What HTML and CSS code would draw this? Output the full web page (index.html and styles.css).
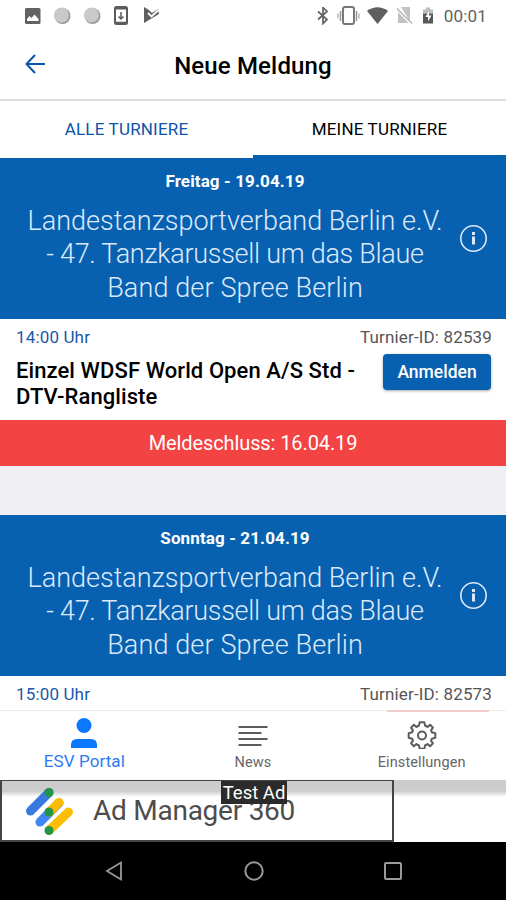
FILE: index.html
```html
<!DOCTYPE html>
<html lang="de">
<head>
    <meta charset="UTF-8">
    <meta name="viewport" content="width=device-width, initial-scale=1.0">
    <title>Neue Meldung</title>
    <link rel="stylesheet" href="styles.css">
</head>
<body>

<div class="status-bar">
    <div class="status-left">
        <svg width="17" height="17" viewBox="0 0 17 17"><rect x="1" y="0" width="15.500" height="16" rx="1.5" fill="#626262"/><path d="M3 13v-2l2.500-3 2 2 3-3.500 4 4.500v2z" fill="#fff"/></svg>
        <svg width="18" height="18" viewBox="0 0 18 18"><circle cx="9.500" cy="9" r="8" fill="#999"/><circle cx="8.500" cy="8" r="7.500" fill="#c9c9c9"/></svg>
        <svg width="18" height="18" viewBox="0 0 18 18"><circle cx="9.500" cy="9" r="8" fill="#999"/><circle cx="8.500" cy="8" r="7.500" fill="#c9c9c9"/></svg>
        <svg width="14" height="20" viewBox="0 0 14 20"><rect x="1" y="1" width="12" height="17" rx="1.500" fill="#fff" stroke="#5c5c5c" stroke-width="2"/><path d="M1 2.500h12M1 16.800h12" stroke="#5c5c5c" stroke-width="2"/><path d="M7 6v7M4.500 10.500L7 13l2.500-2.500" fill="none" stroke="#5c5c5c" stroke-width="1.500"/></svg>
        <svg width="17" height="18" viewBox="0 0 17 18"><path d="M1 0l5 3 3 3 6-4 1 5L1 16z" fill="#606060"/><path d="M5 6l3.500 3.500L15.500 3" fill="none" stroke="#fff" stroke-width="1.800"/></svg>
    </div>
    <div class="status-right">
        <svg width="14" height="18" viewBox="0 0 14 18"><path d="M2 4.500l9 8-4 4V.500l4 4-9 8" fill="none" stroke="#626262" stroke-width="1.700"/></svg>
        <svg width="23" height="20" viewBox="0 0 23 20"><rect x="6" y="1" width="11" height="17" rx="2" fill="none" stroke="#777" stroke-width="2"/><path d="M3.500 5v10M19.500 5v10" stroke="#999" stroke-width="1.500"/><path d="M1 7.500v5M22 7.500v5" stroke="#bbb" stroke-width="1.500"/></svg>
        <svg class="wifi" width="21" height="18" viewBox="0 0 21 18"><path d="M0 4Q10.500-3.500 21 4L10.500 17z" fill="#5e5e5e"/></svg>
        <svg class="sim" width="17" height="18" viewBox="0 0 17 18"><path d="M5 0h9v14.500z" fill="#c2c2c2"/><path d="M2 5v11h10.500z" fill="#c2c2c2"/><path d="M1 1.500l15 15" stroke="#b5b5b5" stroke-width="1.500"/></svg>
        <svg class="battery" width="12" height="18" viewBox="0 0 12 18"><path d="M1 2.500h3V.500h4v2h3v4H1z" fill="#bbb"/><path d="M1 6.500h10v10H1z" fill="#575757"/><path d="M7 4L3.500 10H6v4.500L9.500 8.500H7z" fill="#fff"/></svg>
        <span class="clock">00:01</span>
    </div>
</div>

<header class="header">
    <svg class="back" width="20" height="20" viewBox="0 0 20 20"><path d="M10 1L1.500 10l8.500 9M1.500 10H20" fill="none" stroke="#0d53a9" stroke-width="2"/></svg>
    <h1>Neue Meldung</h1>
</header>

<nav class="tabs">
    <div class="tab active"><span>ALLE TURNIERE</span></div>
    <div class="tab"><span>MEINE TURNIERE</span></div>
</nav>

<main class="content">
    <section class="event">
        <div class="event-head">
            <div class="event-date">Freitag - 19.04.19</div>
            <h2><span class="line1">Landestanzsportverband Berlin e.V.</span><br><span class="line2">- 47. Tanzkarussell um das Blaue</span><br><span class="line3">Band der Spree Berlin</span></h2>
            <svg class="info" width="28" height="28" viewBox="0 0 28 28"><circle cx="14.500" cy="14.500" r="12.700" fill="none" stroke="#dce9fa" stroke-width="1.600"/><path d="M14.500 8v3M14.500 12.500v8" stroke="#dce9fa" stroke-width="3"/></svg>
        </div>
        <div class="event-meta">
            <span class="time">14:00 Uhr</span>
            <span class="id">Turnier-ID: 82539</span>
        </div>
        <div class="event-body">
            <h3>Einzel WDSF World Open A/S Std -<br>DTV-Rangliste</h3>
            <button class="btn">Anmelden</button>
        </div>
        <div class="deadline">Meldeschluss: 16.04.19</div>
    </section>

    <section class="event">
        <div class="event-head">
            <div class="event-date">Sonntag - 21.04.19</div>
            <h2><span class="line1">Landestanzsportverband Berlin e.V.</span><br><span class="line2">- 47. Tanzkarussell um das Blaue</span><br><span class="line3">Band der Spree Berlin</span></h2>
            <svg class="info" width="28" height="28" viewBox="0 0 28 28"><circle cx="14.500" cy="14.500" r="12.700" fill="none" stroke="#dce9fa" stroke-width="1.600"/><path d="M14.500 8v3M14.500 12.500v8" stroke="#dce9fa" stroke-width="3"/></svg>
        </div>
        <div class="event-meta">
            <span class="time">15:00 Uhr</span>
            <span class="id">Turnier-ID: 82573</span>
        </div>
    </section>
</main>

<nav class="tab-bar">
    <div class="peek"></div>
    <div class="bar-item selected">
        <svg width="28" height="32" viewBox="0 0 28 32"><circle cx="14" cy="8.500" r="7.500" fill="#0a78ff"/><path d="M1 31v-3q0-6 6-6h14q6 0 6 6v3z" fill="#0a78ff"/></svg>
        <span>ESV Portal</span>
    </div>
    <div class="bar-item">
        <svg width="30" height="32" viewBox="0 0 30 32"><path d="M.500 10h29M.500 16h23M.500 22h29M.500 28h23" stroke="#5c5c5c" stroke-width="2"/></svg>
        <span>News</span>
    </div>
    <div class="bar-item">
        <svg width="32" height="32" viewBox="-16 -18.500 32 32"><path fill="none" stroke="#5c5c5c" stroke-width="2" stroke-linejoin="round" d="M-2.300-13.200H2.300L3.200-9.800Q4.700-9.300 5.600-8.600L8.100-10.800L10.900-7.900L9-5.200Q9.500-4.400 9.800-3.200L13.300-2.300V2.300L9.800 3.200Q9.500 4.400 9 5.200L10.900 7.900L8.100 10.800L5.600 8.600Q4.700 9.300 3.200 9.800L2.300 13.200H-2.300L-3.200 9.800Q-4.700 9.300-5.600 8.600L-8.100 10.800L-10.900 7.900L-9 5.200Q-9.500 4.400-9.800 3.200L-13.300 2.300V-2.300L-9.800-3.200Q-9.500-4.400-9-5.200L-10.900-7.900L-8.100-10.800L-5.600-8.600Q-4.700-9.300-3.200-9.800Z"/><circle r="4" fill="none" stroke="#5c5c5c" stroke-width="2"/></svg>
        <span>Einstellungen</span>
    </div>
</nav>

<div class="ad">
    <div class="ad-box">
        <svg width="50" height="50" viewBox="0 0 50 50"><g stroke-width="9" stroke-linecap="round"><path d="M7.500 25L26 6.500" stroke="#3979df"/><path d="M17 36L36 17" stroke="#4285f4"/><path d="M26.500 26l9.500-9.500" stroke="#fbbc04"/><path d="M26.500 44L45.500 26" stroke="#fbbc04"/></g><g fill="#249545"><circle cx="26" cy="6.500" r="4.500"/><circle cx="26" cy="26" r="4.500"/><circle cx="26" cy="44.500" r="4.500"/></g></svg>
        <span class="ad-name">Ad Manager 360</span>
    </div>
    <span class="test-ad">Test Ad</span>
</div>

<div class="nav-bar">
    <svg width="20" height="22" viewBox="0 0 20 22"><path d="M17 2.500v17L3 11z" fill="none" stroke="#999" stroke-width="1.800"/></svg>
    <svg width="20" height="20" viewBox="0 0 20 20"><circle cx="10" cy="10" r="8.700" fill="none" stroke="#999" stroke-width="2"/></svg>
    <svg width="20" height="20" viewBox="0 0 20 20"><rect x="2" y="2" width="16" height="16" rx="1" fill="none" stroke="#999" stroke-width="2"/></svg>
</div>

</body>
</html>
```
FILE: styles.css
```css
* {
    box-sizing: border-box;
}
body {
    font-family: Roboto, 'Liberation Sans', sans-serif;
    background-color: #fff;
    color: #000;
    display: flex;
    flex-direction: column;
    width: 506px;
    height: 900px;
    margin: 0;
    overflow: hidden;
}
svg {
    display: block;
    flex-shrink: 0;
}
h1, h2, h3 {
    margin: 0;
}
span, h3 {
    white-space: nowrap;
}
.status-bar {
    height: 32px;
    flex-shrink: 0;
    display: flex;
    justify-content: space-between;
    align-items: center;
    padding: 0 19px 0 24px;
}
.status-left, .status-right {
    display: flex;
    align-items: center;
}
.status-left {
    gap: 12px;
}
.status-left svg:nth-child(4) {
    margin-left: 1px;
}
.status-left svg:nth-child(5) {
    margin-left: 3px;
}
.status-right svg {
    margin-right: 7px;
}
.status-right .wifi {
    margin-right: 8px;
}
.status-right .sim {
    margin-right: 9px;
}
.status-right .battery {
    margin-right: 10px;
}
.clock {
    font-size: 17px;
    color: #626262;
    letter-spacing: 0.2px;
}
.header {
    height: 69px;
    flex-shrink: 0;
    position: relative;
    display: flex;
    align-items: center;
    justify-content: center;
    border-bottom: 2px solid #dedede;
}
.back {
    position: absolute;
    left: 25px;
    top: 22px;
}
.header h1 {
    font-size: 24px;
    font-weight: 500;
    letter-spacing: 0.15px;
}
.tabs {
    height: 57px;
    flex-shrink: 0;
    display: flex;
}
.tab {
    flex: 1;
    display: flex;
    align-items: center;
    justify-content: center;
    padding-top: 1px;
    font-size: 17px;
    letter-spacing: 0.18px;
    border-bottom: 3px solid #0861b0;
}
.tab.active {
    color: #0d53a9;
    border-bottom-color: #fff;
}
.content {
    height: 552px;
    flex-shrink: 0;
    overflow: hidden;
    display: flex;
    flex-direction: column;
    gap: 49px;
    background-color: #efeff4;
}
.event {
    flex-shrink: 0;
    background-color: #fff;
}
.event-head {
    height: 161px;
    position: relative;
    background-color: #0861b0;
    color: #fff;
    padding-top: 12px;
    text-align: center;
}
.event-date {
    font-size: 17px;
    font-weight: bold;
    line-height: 22px;
    letter-spacing: 0.12px;
    padding-right: 36px;
}
.event-head h2 {
    margin-top: 13px;
    padding-right: 36px;
    font-size: 27px;
    font-weight: 300;
    line-height: 33.4px;
    color: #dce9fa;
}
.line2 {
    letter-spacing: -0.28px;
}
.line3 {
    letter-spacing: 0.13px;
}
.info {
    position: absolute;
    right: 19px;
    top: 66px;
}
.event-meta {
    height: 35px;
    padding: 0 14px 0 16px;
    display: flex;
    align-items: center;
    justify-content: space-between;
    font-size: 17px;
    letter-spacing: 0.15px;
}
.time {
    color: #1c57a8;
}
.id {
    color: #555;
}
.event-body {
    height: 66px;
    padding: 0 15px 0 16px;
    display: flex;
    justify-content: space-between;
    align-items: flex-start;
}
.event-body h3 {
    margin-top: 4px;
    font-size: 22px;
    font-weight: 500;
    line-height: 26px;
    letter-spacing: 0.08px;
}
.btn {
    width: 108px;
    height: 36px;
    padding: 0;
    border: none;
    border-radius: 4px;
    background-color: #0861b0;
    color: #fff;
    font-family: inherit;
    font-size: 17.5px;
    font-weight: 500;
    box-shadow: 0 1px 3px rgba(0, 0, 0, 0.35);
}
.deadline {
    height: 46px;
    background-color: #f44343;
    color: #fff;
    font-size: 20px;
    line-height: 47px;
    letter-spacing: -0.1px;
    text-align: center;
}
.tab-bar {
    height: 70px;
    flex-shrink: 0;
    position: relative;
    display: flex;
    background-color: #fff;
    border-top: 1px solid #eee;
}
.peek {
    position: absolute;
    right: 17px;
    top: -1px;
    width: 102px;
    height: 2px;
    background-color: #f3cccc;
}
.bar-item {
    flex: 1;
    display: flex;
    flex-direction: column;
    align-items: center;
    padding-top: 6px;
    color: #666;
    font-size: 14.5px;
    line-height: 27px;
    letter-spacing: 0.1px;
}
.selected {
    color: #2d7af5;
    font-size: 17px;
    line-height: 25px;
}
.ad {
    height: 62px;
    flex-shrink: 0;
    position: relative;
    background: linear-gradient(#ccc, #ccc 11px, #fff 17px);
}
.ad-box {
    width: 394px;
    height: 62px;
    padding-left: 21px;
    display: flex;
    align-items: center;
    gap: 20px;
    border: 2px solid #444;
    border-top-width: 1px;
}
.ad-name {
    font-size: 28px;
    letter-spacing: -0.25px;
    color: #4d4d4d;
}
.test-ad {
    position: absolute;
    left: 221px;
    top: 1px;
    width: 66px;
    height: 23px;
    background-color: #2b2b2b;
    color: #fff;
    font-size: 18.5px;
    line-height: 25px;
    text-align: center;
}
.nav-bar {
    flex: 1;
    display: flex;
    align-items: center;
    justify-content: space-between;
    padding: 0 103px 0 104px;
    background-color: #000;
}
```
